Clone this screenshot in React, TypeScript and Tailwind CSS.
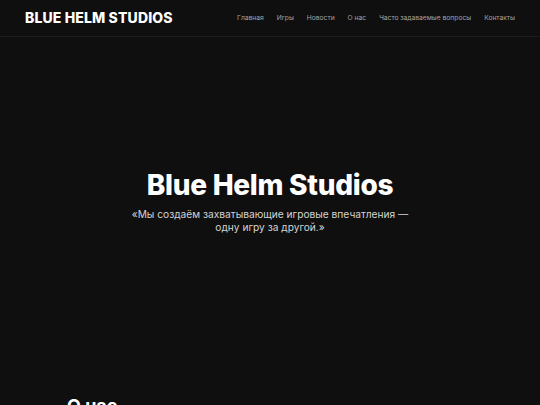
import React from 'react';

const NAV = ['Главная', 'Игры', 'Новости', 'О нас', 'Часто задаваемые вопросы', 'Контакты'];

export default function App() {
  return (
    <div
      className="min-h-screen bg-[#0f0f0f] text-white"
      style={{ fontFamily: 'Inter, "Noto Sans", sans-serif' }}
    >
      {/* Header */}
      <header className="flex h-[37px] items-center justify-between border-b border-[#1c1c1c] px-[25px]">
        <div className="text-[14px] font-extrabold tracking-[0.01em] leading-none">BLUE HELM STUDIOS</div>
        <nav className="flex items-center gap-[13px] text-[6.7px] text-[#a3a3a3]">
          {NAV.map((item) => (
            <a key={item} href="#" className="hover:text-white">
              {item}
            </a>
          ))}
        </nav>
      </header>

      {/* Hero */}
      <section className="flex h-[333px] flex-col items-center justify-center pb-[6px] text-center">
        <h1 className="text-[28px] font-extrabold leading-tight tracking-[-0.01em]">Blue Helm Studios</h1>
        <p className="mt-[5px] w-[290px] text-[10.2px] leading-[13px] text-[#d4d4d4]">
          «Мы создаём захватывающие игровые впечатления — одну игру за другой.»
        </p>
      </section>

      {/* About */}
      <section className="px-[67px] pt-[25px]">
        <h2 className="text-[18px] font-bold leading-tight">О нас</h2>
      </section>
    </div>
  );
}
